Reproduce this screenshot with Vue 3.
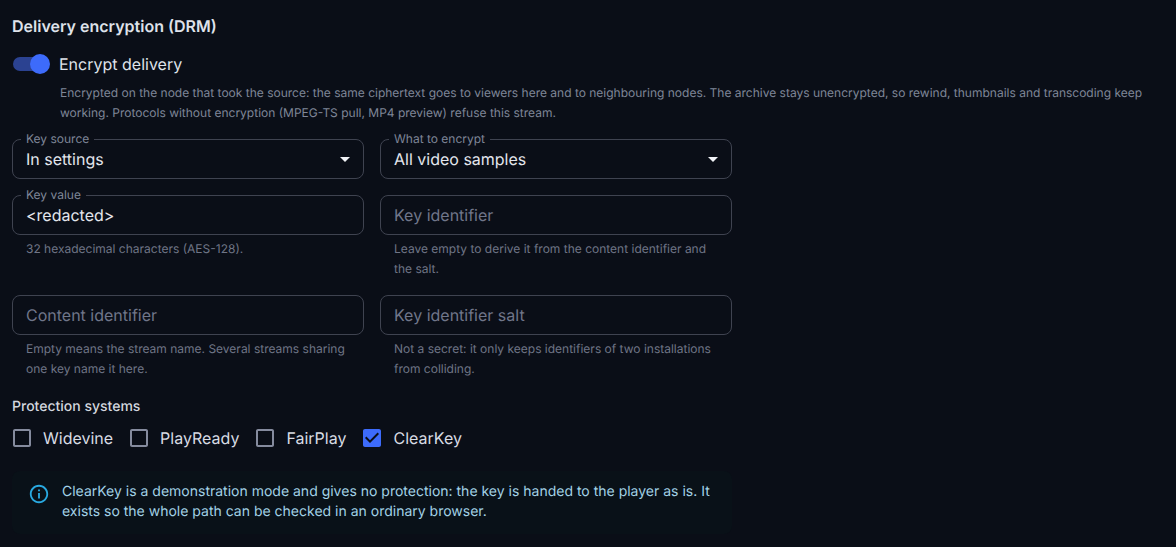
<script setup>
const rows = [
  [
    { label: 'Key source', value: 'In settings', select: true },
    { label: 'What to encrypt', value: 'All video samples', select: true },
  ],
  [
    { label: 'Key value', value: '<redacted>', help: '32 hexadecimal characters (AES-128).' },
    { placeholder: 'Key identifier', help: 'Leave empty to derive it from the content identifier and the salt.' },
  ],
  [
    { placeholder: 'Content identifier', help: 'Empty means the stream name. Several streams sharing one key name it here.' },
    { placeholder: 'Key identifier salt', help: 'Not a secret: it only keeps identifiers of two installations from colliding.' },
  ],
]
const fields = rows.flat()
const systems = [
  { name: 'Widevine', on: false },
  { name: 'PlayReady', on: false },
  { name: 'FairPlay', on: false },
  { name: 'ClearKey', on: true },
]
</script>

<template>
  <main class="page">
    <h2 class="title">Delivery encryption (DRM)</h2>
    <div class="switch-row">
      <span class="switch"><span class="track"></span><span class="thumb"></span></span>
      <span class="switch-label">Encrypt delivery</span>
    </div>
    <p class="desc">Encrypted on the node that took the source: the same ciphertext goes to viewers here and to neighbouring nodes. The archive stays unencrypted, so rewind, thumbnails and transcoding keep working. Protocols without encryption (MPEG-TS pull, MP4 preview) refuse this stream.</p>

    <div class="grid">
      <div v-for="(f, i) in fields" :key="i" class="cell">
        <div class="field">
          <span v-if="f.label" class="float">{{ f.label }}</span>
          <span :class="f.value ? 'value' : 'placeholder'">{{ f.value || f.placeholder }}</span>
          <svg v-if="f.select" class="caret" viewBox="0 0 10 5" width="10" height="5"><path d="M0 0h10L5 5z" fill="#f1f3f7"/></svg>
        </div>
        <p v-if="f.help" class="help">{{ f.help }}</p>
      </div>
    </div>

    <div class="group-title">Protection systems</div>
    <div class="checks">
      <label v-for="s in systems" :key="s.name" class="check">
        <svg class="box" viewBox="0 0 24 24" width="24" height="24">
          <path v-if="s.on" fill="#3d6bfb" d="M19 3H5c-1.11 0-2 .9-2 2v14c0 1.1.89 2 2 2h14c1.11 0 2-.9 2-2V5c0-1.1-.89-2-2-2zm-9 14l-5-5 1.41-1.41L10 14.17l7.59-7.59L19 8l-9 9z"/>
          <path v-else fill="#858b9e" d="M19 5v14H5V5h14m0-2H5c-1.1 0-2 .9-2 2v14c0 1.1.9 2 2 2h14c1.1 0 2-.9 2-2V5c0-1.1-.9-2-2-2z"/>
        </svg>
        <span>{{ s.name }}</span>
      </label>
    </div>

    <div class="alert">
      <svg class="info" viewBox="0 0 24 24" width="22" height="22"><path fill="#29a9e0" d="M11 7h2v2h-2zm0 4h2v6h-2zm1-9C6.48 2 2 6.48 2 12s4.48 10 10 10 10-4.48 10-10S17.52 2 12 2zm0 18c-4.41 0-8-3.59-8-8s3.59-8 8-8 8 3.59 8 8-3.59 8-8 8z"/></svg>
      <p>ClearKey is a demonstration mode and gives no protection: the key is handed to the player as is. It exists so the whole path can be checked in an ordinary browser.</p>
    </div>
  </main>
</template>

<style>
html, body { margin: 0; background: #0a0e17; }
</style>

<style scoped>
.page {
  height: 547px;
  box-sizing: border-box;
  padding: 16px 12px 0;
  overflow: hidden;
  background: #0a0e17;
  font-family: Inter, "Liberation Sans", sans-serif;
  color: #e8ebf1;
  text-rendering: geometricPrecision;
}
.title { margin: 0; font-size: 16px; line-height: 21px; font-weight: 600; color: #dfe2ea; }
.switch-row { display: flex; align-items: center; height: 38px; margin-top: 8px; }
.switch { position: relative; width: 38px; height: 20px; flex: none; }
.track { position: absolute; left: 1px; top: 3px; width: 34px; height: 14px; border-radius: 7px; background: #2b4291; }
.thumb { position: absolute; left: 18px; top: 0; width: 20px; height: 20px; border-radius: 50%; background: #3d6bfb; }
.switch-label { margin-left: 9px; font-size: 16px; color: #dfe3ea; }
.desc { margin: 0 0 0 48px; font-size: 12px; line-height: 20px; color: #7f8698; }
.grid { display: grid; grid-template-columns: 352px 352px; column-gap: 16px; width: 720px; margin-top: 16px; }
.cell { min-width: 0; padding-bottom: 16px; }
.field {
  position: relative;
  box-sizing: border-box;
  height: 40px;
  display: flex;
  align-items: center;
  padding: 0 13px;
  border: 1px solid #3f4350;
  border-radius: 8px;
  font-size: 16px;
}
.float {
  position: absolute;
  left: 8px;
  top: -9px;
  padding: 0 5px;
  font-size: 12px;
  line-height: 15px;
  color: #7f8698;
  background: #0a0e17;
}
.value { color: #e3e6ed; }
.placeholder { color: #70768a; }
.caret { position: absolute; right: 13px; top: 17px; }
.help { margin: 4px 14px 0; font-size: 12px; line-height: 20px; color: #6f7586; }
.group-title { margin-top: 2px; font-size: 14px; line-height: 20px; font-weight: 500; color: #d3d7df; }
.checks { display: flex; margin-top: 9px; gap: 16px; }
.check { display: flex; align-items: center; gap: 12px; font-size: 16px; line-height: 24px; color: #d8dce4; }
.box { flex: none; margin: -3px -3px -3px -2px; }
.alert {
  display: flex;
  box-sizing: border-box;
  width: 720px;
  margin-top: 21px;
  padding: 11px 16px 12px;
  background: #091118;
  border-radius: 8px;
  gap: 12px;
}
.info { flex: none; margin-top: 1px; }
.alert p { margin: 0; font-size: 14px; line-height: 20px; color: #a2d2e6; }
</style>
